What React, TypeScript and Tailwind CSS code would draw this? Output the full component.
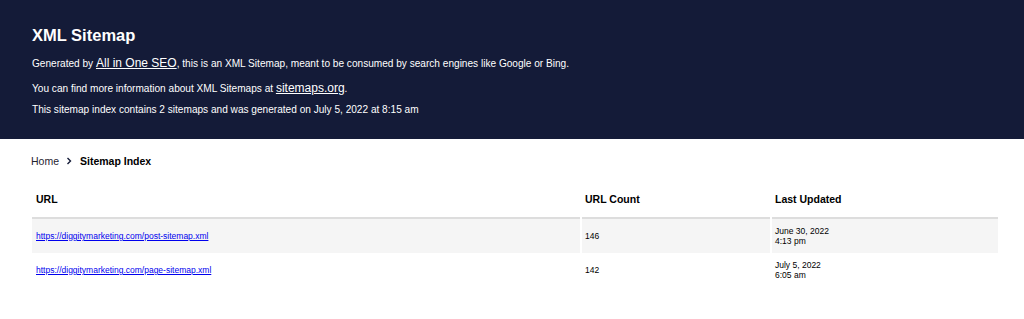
import React from 'react'

const rows = [
    { url: 'https://diggitymarketing.com/post-sitemap.xml', count: 146, date: 'June 30, 2022', time: '4:13 pm' },
    { url: 'https://diggitymarketing.com/page-sitemap.xml', count: 142, date: 'July 5, 2022', time: '6:05 am' },
]

const App = () => {
    return (
        <div className="min-h-[319px] bg-white text-black font-['Liberation_Sans',Arial,sans-serif]">
            <div className="bg-[#141b38] h-[139px] pt-[25px] px-[32px] text-white">
                <h1 className="text-[16.5px] leading-[20px] font-bold">XML Sitemap</h1>
                <p className="mt-[10px] text-[10.1px] leading-[16px]">
                    Generated by <a href="#" className="text-[12px] underline text-white">All in One SEO</a>, this is an XML Sitemap, meant to be consumed by search engines like Google or Bing.
                </p>
                <p className="mt-[8px] text-[10.1px] leading-[16px]">
                    You can find more information about XML Sitemaps at <a href="#" className="text-[12px] underline text-white">sitemaps.org</a>.
                </p>
                <p className="mt-[6px] text-[10.1px] leading-[14px]">
                    This sitemap index contains 2 sitemaps and was generated on July 5, 2022 at 8:15 am
                </p>
            </div>

            <div className="px-[31px] pt-[15px]">
                <div className="flex items-center text-[10.5px] leading-[14px]">
                    <span className="text-[#1f2430]">Home</span>
                    <svg className="mx-[7px]" width="6" height="8" viewBox="0 0 6 8" fill="none">
                        <path d="M1.5 1L4.5 4L1.5 7" stroke="#141b38" strokeWidth="1.4" />
                    </svg>
                    <span className="ml-[1px] font-bold">Sitemap Index</span>
                </div>
            </div>

            <div className="pl-[32px] mt-[15px]">
                <div className="grid grid-cols-[548px_188px_226px] gap-x-[2px] text-[10.5px] font-bold">
                    <div className="h-[36px] flex items-center pl-[4px] border-b-2 border-[#dddddd]">URL</div>
                    <div className="h-[36px] flex items-center pl-[3px] border-b-2 border-[#dddddd]">URL Count</div>
                    <div className="h-[36px] flex items-center pl-[3px] border-b-2 border-[#dddddd]">Last Updated</div>
                </div>
                {rows.map((r, i) => (
                    <div key={r.url} className="grid grid-cols-[548px_188px_226px] gap-x-[2px] text-[8.5px] leading-[10px]">
                        <div className={`h-[34px] flex items-center pl-[4px] ${i % 2 === 0 ? 'bg-[#f5f5f5]' : ''}`}>
                            <a href="#" className="text-[#0000ee] underline">{r.url}</a>
                        </div>
                        <div className={`h-[34px] flex items-center pl-[3px] ${i % 2 === 0 ? 'bg-[#f5f5f5]' : ''}`}>{r.count}</div>
                        <div className={`h-[34px] flex flex-col justify-center pl-[3px] ${i % 2 === 0 ? 'bg-[#f5f5f5]' : ''}`}>
                            <span>{r.date}</span>
                            <span>{r.time}</span>
                        </div>
                    </div>
                ))}
            </div>
        </div>
    )
}

export default App
